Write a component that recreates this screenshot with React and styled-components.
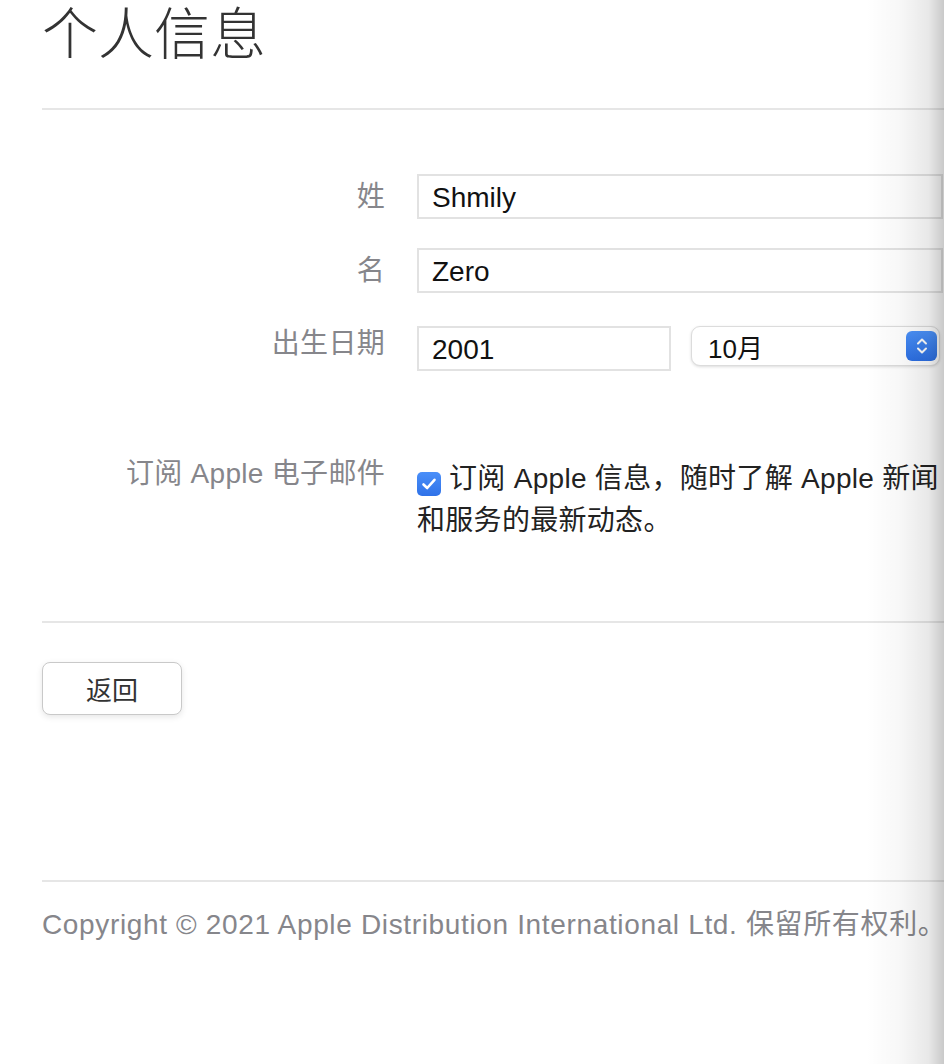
import React from "react";
import styled, { createGlobalStyle } from "styled-components";

const Global = createGlobalStyle`
  html, body { margin: 0; padding: 0; background: #fff; }
  body {
    font-family: "Liberation Sans", "Noto Sans CJK SC", sans-serif;
    font-size: 28px;
    color: #333;
    overflow: hidden;
  }
  * { box-sizing: border-box; }
`;

const Page = styled.div`
  position: relative;
  width: 944px;
  min-height: 1064px;
  padding-left: 42px;
  overflow: hidden;
`;

const Title = styled.h1`
  margin: 0;
  height: 108px;
  padding-top: 0;
  font-family: "Noto Sans CJK SC", sans-serif;
  font-weight: 300;
  font-size: 56px;
  line-height: 60px;
  color: #333;
`;

const Divider = styled.hr`
  margin: 0;
  border: 0;
  height: 2px;
  width: 902px;
  background: #e6e6e6;
`;

const Form = styled.div`
  display: flex;
  flex-direction: column;
  padding-top: 64px;
  padding-bottom: 79px;
`;

const Row = styled.div`
  display: grid;
  grid-template-columns: 343px 526px;
  column-gap: 32px;
  margin-top: ${(p) => p.$gap || 0}px;
`;

const Label = styled.div`
  text-align: right;
  color: #86868b;
  font-size: 28px;
  line-height: 42px;
  letter-spacing: 0.3px;
  margin-top: ${(p) => p.$offset || 0}px;
  white-space: nowrap;
`;

const TextInput = styled.div`
  height: 45px;
  width: ${(p) => p.$width || "100%"};
  border: 2px solid #e2e2e2;
  padding: 3px 0 0 13px;
  display: flex;
  align-items: center;
  color: #111;
  font-size: 28px;
  background: #fff;
`;

const DateRow = styled.div`
  display: flex;
  align-items: flex-start;
  gap: 20px;
`;

const Select = styled.div`
  position: relative;
  width: 249px;
  height: 40px;
  border-radius: 9px;
  border: 1px solid #dcdcdc;
  box-shadow: 0 1px 3px rgba(0, 0, 0, 0.14);
  background: #fff;
  display: flex;
  align-items: center;
  justify-content: space-between;
  padding: 0 2px 0 16px;
  color: #111;
  font-size: 26px;
`;

const Stepper = styled.span`
  width: 31px;
  height: 30px;
  border-radius: 6px;
  background: linear-gradient(#4b92fa, #2c6fe4);
  display: flex;
  align-items: center;
  justify-content: center;
`;

const CheckText = styled.div`
  font-size: 28px;
  line-height: 42px;
  letter-spacing: 0.3px;
  color: #222;
  margin-top: 6px;
`;

const CheckBox = styled.span`
  display: inline-flex;
  align-items: center;
  justify-content: center;
  width: 24px;
  height: 24px;
  border-radius: 5px;
  background: linear-gradient(#4a8ff9, #2f72e8);
  vertical-align: -3px;
  margin-right: 8px;
`;

const Actions = styled.div`
  padding-top: 39px;
  height: 257px;
`;

const Button = styled.button`
  width: 140px;
  height: 53px;
  border-radius: 8px;
  border: 1.5px solid #c9c9c9;
  background: #fff;
  box-shadow: 0 2px 6px rgba(0, 0, 0, 0.1);
  font-family: "Noto Sans CJK SC", sans-serif;
  font-size: 26px;
  color: #333;
  padding: 0;
`;

const Copyright = styled.p`
  margin: 22px 0 0;
  font-size: 28px;
  line-height: 42px;
  letter-spacing: 0.65px;
  color: #86868b;
  white-space: nowrap;
`;

const EdgeShade = styled.div`
  position: absolute;
  top: 0;
  right: 0;
  width: 78px;
  height: 100%;
  pointer-events: none;
  background: linear-gradient(
    to right,
    rgba(0, 0, 0, 0) 0%,
    rgba(0, 0, 0, 0.03) 45%,
    rgba(0, 0, 0, 0.09) 80%,
    rgba(0, 0, 0, 0.21) 100%
  );
`;

export default function App() {
  return (
    <>
      <Global />
      <Page>
        <Title>个人信息</Title>
        <Divider />
        <Form>
          <Row>
            <Label $offset={2}>姓</Label>
            <TextInput>Shmily</TextInput>
          </Row>
          <Row $gap={29}>
            <Label $offset={2}>名</Label>
            <TextInput>Zero</TextInput>
          </Row>
          <Row $gap={33}>
            <Label $offset={-3}>出生日期</Label>
            <DateRow>
              <TextInput $width="254px">2001</TextInput>
              <Select>
                <span>10月</span>
                <Stepper>
                  <svg width="14" height="20" viewBox="0 0 14 20" fill="none">
                    <path d="M3 7.5 L7 3.5 L11 7.5" stroke="#fff" strokeWidth="2" strokeLinecap="round" strokeLinejoin="round" />
                    <path d="M3 12.5 L7 16.5 L11 12.5" stroke="#fff" strokeWidth="2" strokeLinecap="round" strokeLinejoin="round" />
                  </svg>
                </Stepper>
              </Select>
            </DateRow>
          </Row>
          <Row $gap={81}>
            <Label $offset={1}>订阅 Apple 电子邮件</Label>
            <CheckText>
              <CheckBox>
                <svg width="16" height="14" viewBox="0 0 16 14" fill="none">
                  <path d="M2.5 7.5 L6.2 11 L13.5 2.8" stroke="#fff" strokeWidth="2.6" strokeLinecap="round" strokeLinejoin="round" />
                </svg>
              </CheckBox>
              订阅 Apple 信息，随时了解 Apple 新闻和服务的最新动态。
            </CheckText>
          </Row>
        </Form>
        <Divider />
        <Actions>
          <Button>返回</Button>
        </Actions>
        <Divider />
        <Copyright>Copyright © 2021 Apple Distribution International Ltd. 保留所有权利。</Copyright>
        <EdgeShade />
      </Page>
    </>
  );
}
